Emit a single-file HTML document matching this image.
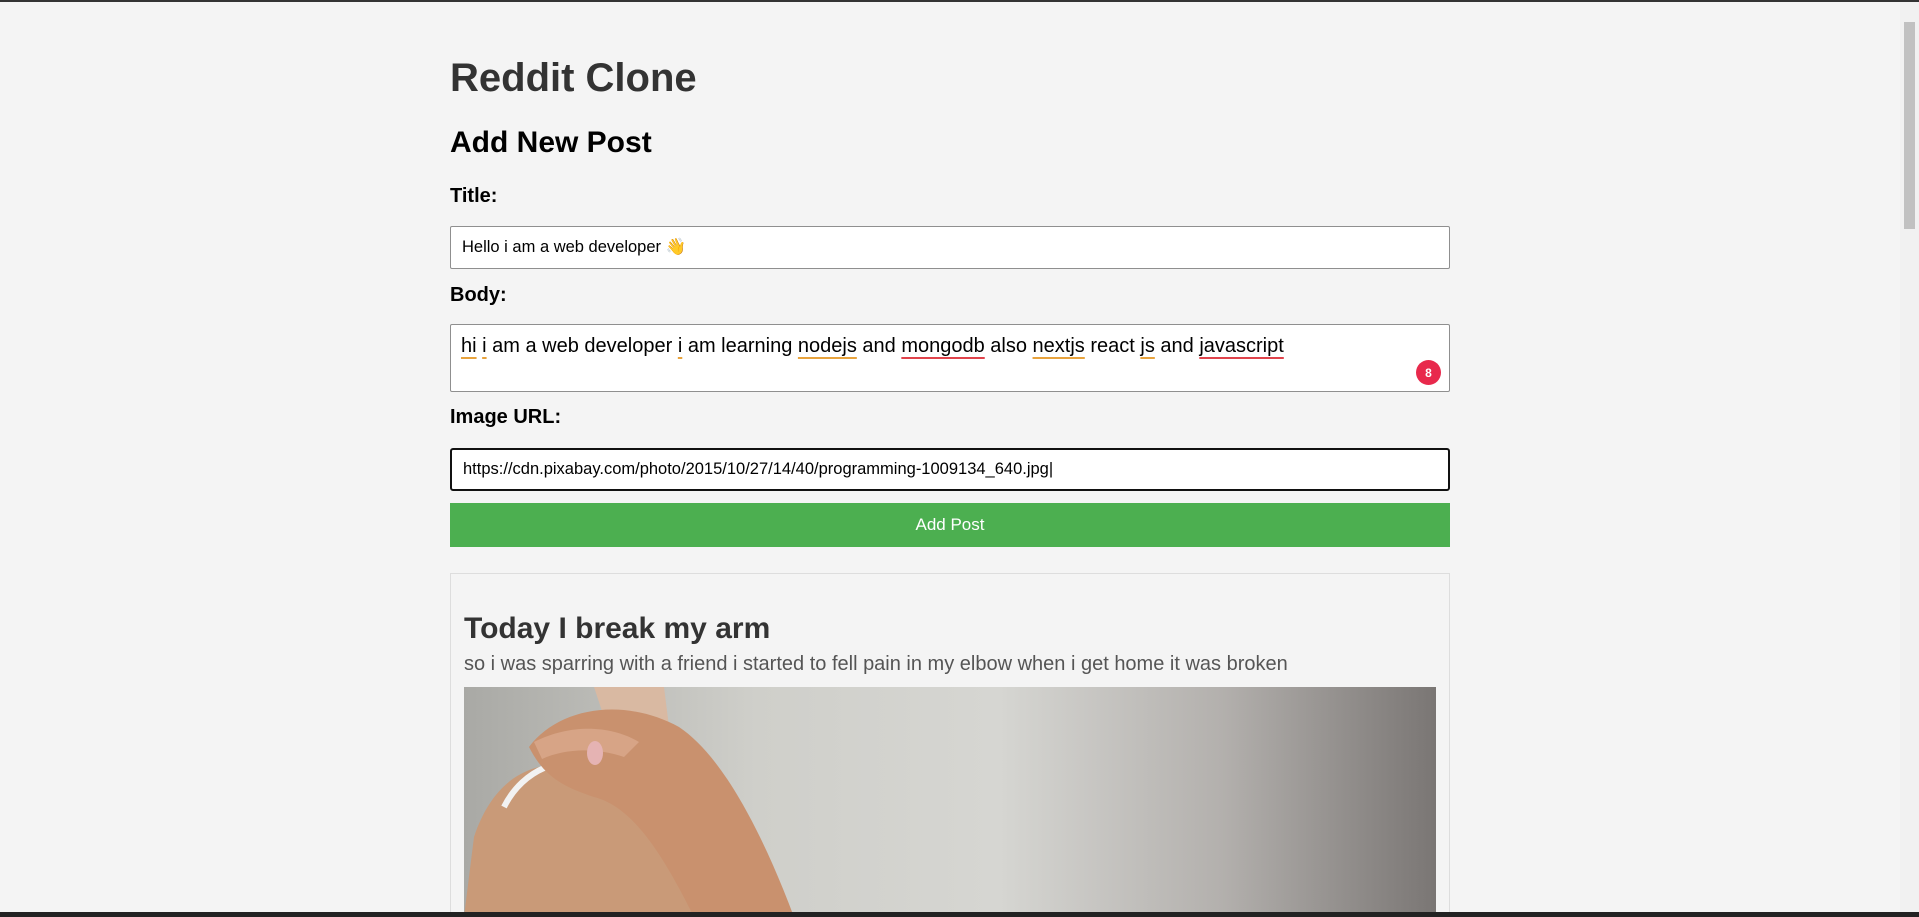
<!DOCTYPE html>
<html><head><meta charset="utf-8"><style>
html,body{margin:0;padding:0;width:1919px;height:917px;overflow:hidden;}
body{background:#f4f4f4;font-family:"Liberation Sans",Arial,sans-serif;position:relative;}
.topline{position:absolute;left:0;top:0;width:1919px;height:2px;background:#333;}
.bot{position:absolute;left:0;top:912px;width:1919px;height:5px;background:#222;}
.sb{position:absolute;right:0;top:2px;width:19px;height:910px;background:#f1f1f1;}
.sb .th{position:absolute;left:4px;top:20px;width:11px;height:207px;background:#c1c1c1;}
.abs{position:absolute;margin:0;}
h1{left:450px;top:54px;font-size:40px;line-height:48px;color:#333;font-weight:bold;}
h2{left:450px;top:125px;font-size:30px;line-height:36px;color:#000;font-weight:bold;}
.lbl{left:450px;font-size:20px;font-weight:bold;color:#000;line-height:24px;}
.inp{left:450px;width:1000px;box-sizing:border-box;background:#fff;border:1px solid #8f8f8f;border-radius:2px;padding-left:11px;font-size:16.5px;color:#000;display:flex;align-items:center;}
.u{text-decoration:underline;text-decoration-color:#e8a33d;text-underline-offset:5px;text-decoration-thickness:2px;}
.r{text-decoration-color:#e0434b;}
.btn{left:450px;top:503px;width:1000px;height:44px;background:#4CAF50;color:#fff;font-size:17px;display:flex;align-items:center;justify-content:center;}
.card{left:450px;top:573px;width:1000px;height:344px;box-sizing:border-box;border:1px solid #ddd;border-bottom:none;}
.img{left:464px;top:687px;width:972px;height:230px;overflow:hidden;background:linear-gradient(90deg,#a9a9a5 0%,#cfcfca 30%,#d6d6d2 55%,#b3b0ad 78%,#7a7674 100%);}
</style></head><body>
<div class="topline"></div>
<h1 class="abs">Reddit Clone</h1>
<h2 class="abs">Add New Post</h2>
<div class="abs lbl" style="top:184px">Title:</div>
<div class="abs inp" style="top:226px;height:43px">Hello i am a web developer 👋</div>
<div class="abs lbl" style="top:283px">Body:</div>
<div class="abs inp" style="top:324px;height:68px;align-items:flex-start;padding-top:10px;padding-left:10px;font-size:20px;">
<span><span class="u">hi</span> <span class="u">i</span> am a web developer <span class="u">i</span> am learning <span class="u">nodejs</span> and <span class="u r">mongodb</span> also <span class="u">nextjs</span> react <span class="u">js</span> and <span class="u r">javascript</span></span></div>
<div class="abs" style="left:1416px;top:360px;width:25px;height:25px;border-radius:50%;background:#e8294c;color:#fff;font-size:12px;font-weight:bold;display:flex;align-items:center;justify-content:center;">8</div>
<div class="abs lbl" style="top:405px">Image URL:</div>
<div class="abs inp" style="top:448px;height:43px;border:2px solid #111;border-radius:3px;">https://cdn.pixabay.com/photo/2015/10/27/14/40/programming-1009134_640.jpg|</div>
<div class="abs btn">Add Post</div>
<div class="abs card"></div>
<div class="abs" style="left:464px;top:611px;font-size:30px;font-weight:bold;color:#333;line-height:36px;">Today I break my arm</div>
<div class="abs" style="left:464px;top:652px;font-size:20px;color:#555;line-height:24px;">so i was sparring with a friend i started to fell pain in my elbow when i get home it was broken</div>
<div class="abs img">
<svg width="972" height="230" viewBox="0 0 972 230">
<path d="M130 0 L200 0 L205 40 L150 60 Z" fill="#d9b9a2"/>
<path d="M0 230 L10 150 C30 90 70 70 120 80 C170 85 210 120 240 170 L270 230 Z" fill="#c99a78"/>
<path d="M40 120 C60 80 100 70 120 78" stroke="#f2f2f2" stroke-width="6" fill="none"/>
<path d="M65 60 C95 20 160 10 215 40 C260 70 300 150 330 230 L230 230 C200 170 170 120 130 110 C100 100 80 90 65 60 Z" fill="#c9916e"/>
<path d="M70 55 C110 35 150 40 175 55 L160 70 C130 60 100 62 78 72 Z" fill="#d7a486"/>
<ellipse cx="131" cy="66" rx="8" ry="12" fill="#e5b3b3"/>
</svg>
</div>
<div class="sb"><div class="th"></div></div>
<div class="bot"></div>
</body></html>
